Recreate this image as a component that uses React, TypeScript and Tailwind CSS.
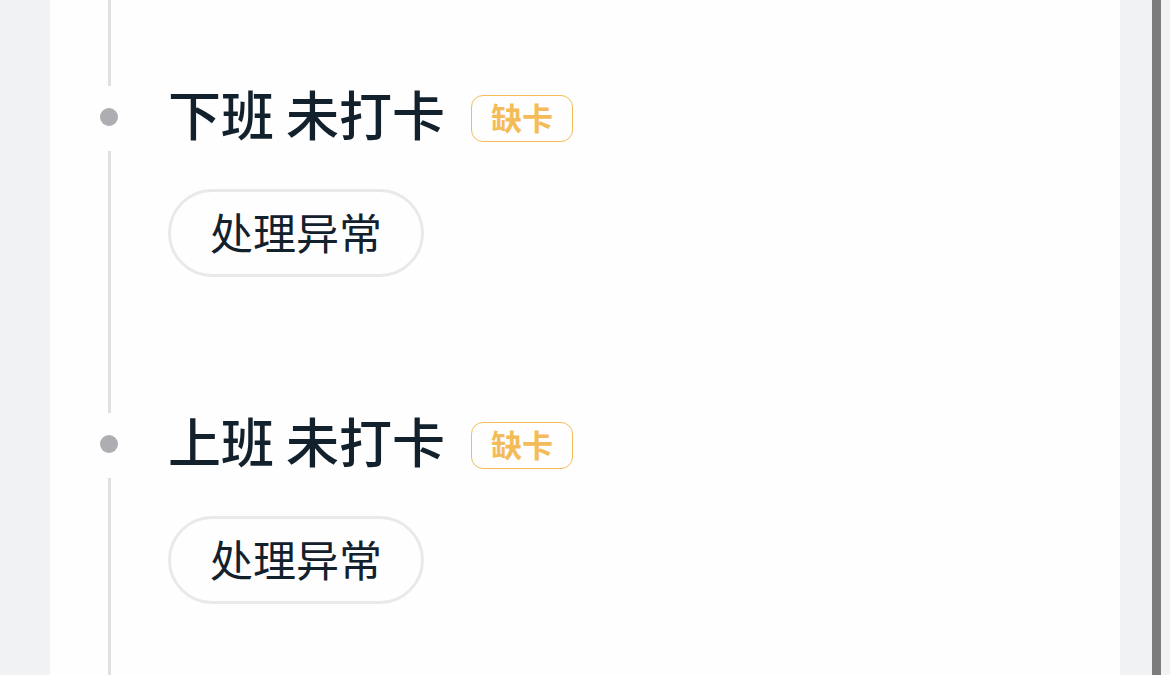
import React from "react";

const records = [
  { id: "off", title: "下班 未打卡", tag: "缺卡", action: "处理异常" },
  { id: "on", title: "上班 未打卡", tag: "缺卡", action: "处理异常" },
];

function PunchRecord({ title, tag, action }: { title: string; tag: string; action: string }) {
  return (
    <li className="flex">
      <div className="flex w-[18px] shrink-0 flex-col items-center">
        <span className="mt-[22px] mb-[25px] size-[18px] shrink-0 rounded-full bg-[#adadb2]" />
        <span className="w-[3px] grow bg-[#e0e0e2]" />
      </div>
      <div className="pb-[136px] pl-[50px]">
        <div className="flex h-[54px] items-start gap-[26px]">
          <h2 className="text-[53px] leading-[54px] font-medium">{title}</h2>
          <span className="mt-[9px] flex h-[47px] items-center rounded-[12px] border border-[#f4bc58] px-[19px] pb-1 text-[31px] leading-none font-bold text-[#f4bc58]">
            {tag}
          </span>
        </div>
        <button className="mt-[49px] flex h-[88px] items-center rounded-full border-3 border-[#e9e9eb] px-[39px] pb-1 text-[43px] leading-none">
          {action}
        </button>
      </div>
    </li>
  );
}

export default function App() {
  return (
    <main
      lang="zh-CN"
      className="flex h-screen overflow-hidden bg-[#f0f2f4] pl-[50px] font-['Noto_Sans_CJK_SC',sans-serif] text-[#13212d]"
    >
      <section className="grow bg-[#fefefe] pl-[50px]">
        <div className="flex h-[86px] w-[18px] justify-center">
          <span className="w-[3px] bg-[#e0e0e2]" />
        </div>
        <ul>
          {records.map((record) => (
            <PunchRecord key={record.id} title={record.title} tag={record.tag} action={record.action} />
          ))}
        </ul>
      </section>
      <div className="ml-8 w-[9px] shrink-0 bg-[#7c7c7c]" />
      <div className="w-[9px] shrink-0 bg-[#f2f1f3]" />
    </main>
  );
}
